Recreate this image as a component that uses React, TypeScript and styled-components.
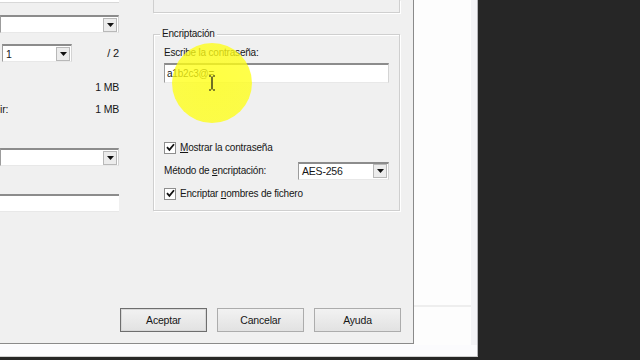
import React from 'react';
import styled, { createGlobalStyle } from 'styled-components';

const GlobalStyle = createGlobalStyle`
  html, body {
    margin: 0;
    padding: 0;
    background: #262626;
    overflow: hidden;
  }
  body {
    font-family: "Liberation Sans", Arial, sans-serif;
    font-size: 10px;
    letter-spacing: -0.2px;
    color: #161616;
  }
`;

function Arrow() {
  return (
    <svg width="7" height="4" viewBox="0 0 7 4">
      <path d="M0 0 H7 L3.5 4 Z" fill="#111" />
    </svg>
  );
}

function Check() {
  return (
    <svg width="9" height="9" viewBox="0 0 9 9">
      <path d="M1 4.2 L3.4 6.8 L8 1.2" stroke="#111" strokeWidth="1.8" fill="none" />
    </svg>
  );
}

function IBeam() {
  return (
    <svg width="8" height="16" viewBox="0 0 8 16">
      <path d="M1 1 H3 M5 1 H7 M4 1.5 V14.5 M1 15 H3 M5 15 H7" stroke="#111" strokeWidth="1.2" fill="none" />
    </svg>
  );
}

function ComboBox({ value, width }: { value?: string; width: number }) {
  return (
    <Combo style={{ width }}>
      <ComboText>{value}</ComboText>
      <DropButton>
        <Arrow />
      </DropButton>
    </Combo>
  );
}

function CheckRow({ label, hot }: { label: string; hot: number }) {
  return (
    <CheckLine>
      <CheckBox>
        <Check />
      </CheckBox>
      <span>
        {label.slice(0, hot)}
        <u>{label[hot]}</u>
        {label.slice(hot + 1)}
      </span>
    </CheckLine>
  );
}

export default function App() {
  return (
    <>
      <GlobalStyle />
      <Screen>
        <Top>
          <Dialog>
            <Body>
              <LeftCol>
                <CutField />
                <ComboBox width={119} />
                <SplitRow>
                  <ComboBox value="1" width={70} />
                  <span>/ 2</span>
                </SplitRow>
                <InfoRow $top={19}>
                  <span />
                  <span>1 MB</span>
                </InfoRow>
                <InfoRow $top={10}>
                  <span>ir:</span>
                  <span>1 MB</span>
                </InfoRow>
                <ComboWrap>
                  <ComboBox width={119} />
                </ComboWrap>
                <TextField />
              </LeftCol>
              <RightCol>
                <PrevGroup />
                <Group>
                  <Legend>Encriptación</Legend>
                  <Label>Escribe la contraseña:</Label>
                  <PasswordBox>
                    <span>a1b2c3@=</span>
                  </PasswordBox>
                  <Options>
                    <CheckRow label="Mostrar la contraseña" hot={0} />
                    <MethodRow>
                      <span>
                        Método de <u>e</u>ncriptación:
                      </span>
                      <ComboBox value="AES-256" width={91} />
                    </MethodRow>
                    <CheckRow label="Encriptar nombres de fichero" hot={10} />
                  </Options>
                  <Highlight />
                  <Cursor>
                    <IBeam />
                  </Cursor>
                </Group>
              </RightCol>
            </Body>
            <ButtonRow>
              <Button $primary>Aceptar</Button>
              <Button>Cancelar</Button>
              <Button>Ayuda</Button>
            </ButtonRow>
          </Dialog>
          <BackWindow>
            <BackLine />
          </BackWindow>
        </Top>
        <BottomStrip />
      </Screen>
    </>
  );
}

const Screen = styled.div`
  width: 640px;
  height: 360px;
  display: flex;
  flex-direction: column;
`;

const Top = styled.div`
  display: flex;
  height: 345px;
  width: 478px;
  background: #fdfdfd;
  border-right: 1px solid #b4b4b8;
  box-sizing: border-box;
`;

const Dialog = styled.div`
  width: 414px;
  height: 344px;
  background: #f0f0f0;
  border-right: 1px solid #8a8a8a;
  border-bottom: 1px solid #8a8a8a;
  box-sizing: border-box;
  display: flex;
  flex-direction: column;
`;

const Body = styled.div`
  display: flex;
  gap: 34px;
  flex: 1;
`;

const LeftCol = styled.div`
  width: 119px;
  display: flex;
  flex-direction: column;
`;

const CutField = styled.div`
  height: 2px;
  margin-bottom: 12px;
  border-bottom: 1px solid #d8d8d8;
  background: #fff;
`;

const Combo = styled.div`
  height: 18px;
  box-sizing: border-box;
  display: flex;
  align-items: center;
  background: #fff;
  border-top: 2px solid #8c8c8c;
  border-left: 1px solid #9c9c9c;
  border-right: 1px solid #d4d4d4;
  border-bottom: 1px solid #e8e8e8;
`;

const ComboText = styled.span`
  flex: 1;
  padding-left: 3px;
  font-size: 10.5px;
`;

const DropButton = styled.div`
  width: 14px;
  height: 14px;
  margin-right: 1px;
  display: flex;
  align-items: center;
  justify-content: center;
  background: #ececec;
  border: 1px solid #b8b8b8;
  box-sizing: border-box;
`;

const SplitRow = styled.div`
  display: flex;
  justify-content: space-between;
  align-items: center;
  margin-top: 11px;
  padding-left: 2px;
  font-size: 11px;
`;

const InfoRow = styled.div<{ $top: number }>`
  display: flex;
  justify-content: space-between;
  margin-top: ${(p) => p.$top}px;
  height: 12px;
  line-height: 12px;
  font-size: 10.5px;
`;

const ComboWrap = styled.div`
  margin-top: 33px;
`;

const TextField = styled.div`
  margin-top: 28px;
  height: 18px;
  background: #fff;
  border-top: 2px solid #8c8c8c;
  border-bottom: 1px solid #e8e8e8;
  box-sizing: border-box;
`;

const RightCol = styled.div`
  width: 247px;
  display: flex;
  flex-direction: column;
`;

const PrevGroup = styled.div`
  height: 12px;
  border: 1px solid #cfcfcf;
  border-top: none;
  box-shadow: 1px 1px 0 #fff;
`;

const Group = styled.div`
  position: relative;
  margin-top: 21px;
  height: 177px;
  box-sizing: border-box;
  border: 1px solid #cfcfcf;
  box-shadow: inset 1px 1px 0 #fff, 1px 1px 0 #fff;
  padding: 12px 10px 0 10px;
`;

const Legend = styled.span`
  position: absolute;
  top: -7px;
  left: 6px;
  padding: 0 2px;
  background: #f0f0f0;
  line-height: 12px;
`;

const Label = styled.div`
  height: 12px;
  line-height: 12px;
`;

const PasswordBox = styled.div`
  margin-top: 4px;
  height: 20px;
  box-sizing: border-box;
  background: #fff;
  border-top: 2px solid #8c8c8c;
  border-left: 1px solid #9c9c9c;
  border-right: 1px solid #d4d4d4;
  border-bottom: 1px solid #e8e8e8;
  display: flex;
  align-items: center;
  padding-left: 2px;
`;

const Options = styled.div`
  margin-top: 58px;
  display: flex;
  flex-direction: column;
  gap: 8px;
`;

const CheckLine = styled.div`
  display: flex;
  align-items: center;
  gap: 4px;
  height: 13px;
`;

const CheckBox = styled.div`
  width: 12px;
  height: 12px;
  box-sizing: border-box;
  border: 1px solid #8e8e8e;
  background: #fff;
  display: flex;
  align-items: center;
  justify-content: center;
`;

const MethodRow = styled.div`
  display: flex;
  justify-content: space-between;
  align-items: center;
  height: 17px;
`;

const Highlight = styled.div`
  position: absolute;
  left: 18px;
  top: 8px;
  width: 80px;
  height: 80px;
  border-radius: 50%;
  background: radial-gradient(circle, rgba(255, 255, 20, 0.8) 0%, rgba(255, 255, 20, 0.76) 88%, rgba(255, 255, 20, 0) 100%);
  pointer-events: none;
`;

const Cursor = styled.div`
  position: absolute;
  left: 54px;
  top: 40px;
  line-height: 0;
`;

const ButtonRow = styled.div`
  display: flex;
  justify-content: flex-end;
  gap: 10px;
  padding: 0 12px 11px 0;
`;

const Button = styled.button<{ $primary?: boolean }>`
  width: 87px;
  height: 24px;
  font-family: inherit;
  font-size: 10.5px;
  letter-spacing: -0.2px;
  color: #161616;
  background: linear-gradient(#f2f2f2, #e2e2e2);
  border: 1px solid ${(p) => (p.$primary ? '#6e6e6e' : '#acacac')};
  box-shadow: ${(p) => (p.$primary ? 'inset 0 0 0 1px #d8d8d8' : 'none')};
  padding: 0;
`;

const BackWindow = styled.div`
  flex: 1;
  display: flex;
  flex-direction: column;
  justify-content: flex-end;
  padding-right: 6px;
  padding-bottom: 38px;
  background: #fdfdfd;
  box-shadow: inset -6px 0 0 #f3f3f6;
`;

const BackLine = styled.div`
  height: 2px;
  background: #eeeeee;
`;

const BottomStrip = styled.div`
  width: 478px;
  height: 12px;
  background: #fbfbfd;
  border-right: 1px solid #b4b4b8;
  border-bottom: 1px solid #d0d0d0;
  box-sizing: border-box;
`;
